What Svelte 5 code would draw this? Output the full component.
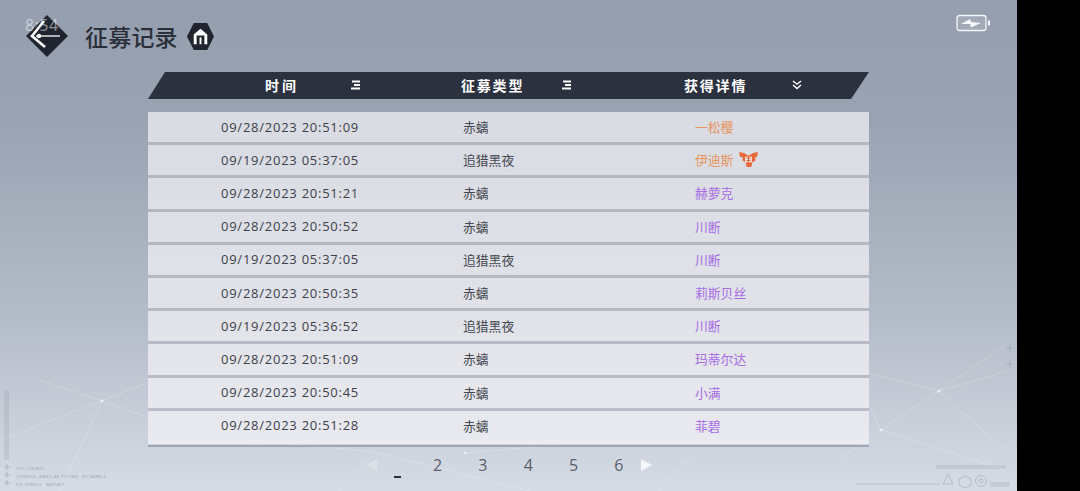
<script lang="ts">
	const rows = [
		{ time: '09/28/2023 20:51:09', type: '赤螭', name: '一松樱', tier: 'orange' },
		{ time: '09/19/2023 05:37:05', type: '追猎黑夜', name: '伊迪斯', tier: 'orange', badge: true },
		{ time: '09/28/2023 20:51:21', type: '赤螭', name: '赫萝克', tier: 'purple' },
		{ time: '09/28/2023 20:50:52', type: '赤螭', name: '川断', tier: 'purple' },
		{ time: '09/19/2023 05:37:05', type: '追猎黑夜', name: '川断', tier: 'purple' },
		{ time: '09/28/2023 20:50:35', type: '赤螭', name: '莉斯贝丝', tier: 'purple' },
		{ time: '09/19/2023 05:36:52', type: '追猎黑夜', name: '川断', tier: 'purple' },
		{ time: '09/28/2023 20:51:09', type: '赤螭', name: '玛蒂尔达', tier: 'purple' },
		{ time: '09/28/2023 20:50:45', type: '赤螭', name: '小满', tier: 'purple' },
		{ time: '09/28/2023 20:51:28', type: '赤螭', name: '菲碧', tier: 'purple' }
	];
	const pages = [2, 3, 4, 5, 6];
</script>

<div class="screen">
	<svg class="mesh" viewBox="0 0 1017 491" aria-hidden="true">
		<g stroke="#fff" stroke-opacity="0.2" stroke-width="1" fill="none">
			<polyline points="0,440 102,401 148,382" />
			<polyline points="40,380 102,401 150,418" />
			<polyline points="102,401 60,491" />
			<polyline points="869,373 939,391 1005,345" />
			<polyline points="939,391 1005,372" />
			<polyline points="939,391 1010,455" />
			<polyline points="881,430 939,391" />
			<polyline points="881,430 1005,470" />
			<polyline points="869,405 881,430 840,458" />
			<polyline points="340,491 375,452 530,491" />
			<polyline points="375,452 250,440" />
			<polyline points="465,453 560,445" />
			<polyline points="660,491 700,445" />
		</g>
		<g fill="#fff" fill-opacity="0.6">
			<circle cx="102" cy="401" r="1.6" />
			<circle cx="939" cy="391" r="1.6" />
			<circle cx="881" cy="430" r="1.6" />
			<circle cx="465" cy="453" r="1.3" />
		</g>
		<g stroke="#8d96a6" stroke-opacity="0.45" fill="none">
			<path d="M1010 344v8M1006 348h8M1010 360v8M1006 364h8" />
			<path d="M4 467h6M7 464v6M4 475h6M7 472v6M4 483h6M7 480v6" />
			<path d="M856 484h84" />
			<path d="M948 474l-5 10h10z" />
			<path d="M965 476l6 3v6l-6 3-6-3v-6z" />
			<circle cx="981" cy="481" r="5.5" />
			<circle cx="981" cy="481" r="2" />
		</g>
		<g fill="#8d96a6" fill-opacity="0.22">
			<rect x="4" y="390" width="5" height="70" />
			<rect x="936" y="465" width="70" height="4" />
			<rect x="990" y="482" width="20" height="5" />
		</g>
	</svg>

	<div class="hud">
		<span>CITY COUNTS</span>
		<span>CONSOLE: ANGULAR PITTING &nbsp; RU-SARB14</span>
		<span>DIE-TENSILE · BASTACT</span>
	</div>

	<header class="topbar">
		<div class="back">
			<svg viewBox="0 0 52 44" width="52" height="44" aria-hidden="true">
				<path d="M26 1 47 22 26 43 5 22z" fill="#20242e" />
				<path d="M23 7 11 22l13 11" fill="none" stroke="#fff" stroke-width="2.6" />
				<path d="M15 22h24" stroke="#fff" stroke-width="1.3" />
				<circle cx="18" cy="22" r="2.2" fill="#fff" />
			</svg>
			<span class="clock">8:54</span>
		</div>
		<h1>征募记录</h1>
		<svg class="home" viewBox="0 0 30 30" width="29" height="29" aria-hidden="true">
			<path d="M8 1h14l7 14-7 14H8L1 15z" fill="#20242e" />
			<path d="M8 23V13l7-6 7 6v10h-3v-9h-8v9z" fill="#fff" />
			<rect x="14" y="16" width="2" height="7" fill="#fff" />
		</svg>
		<div class="battery">
			<svg viewBox="0 0 34 18" width="34" height="18" aria-hidden="true">
				<rect x="1" y="1.5" width="29" height="15" rx="2.5" fill="rgba(255,255,255,0.12)" stroke="#f4f6f9" stroke-width="1.3" />
				<rect x="32" y="6.5" width="2" height="5" fill="#f4f6f9" />
				<path d="M5 10l9-5 1 3 10 1-10 4.500-1-3.500z" fill="#f8f9fb" />
			</svg>
		</div>
	</header>

	<main class="board">
		<div class="head">
			<div class="hcell first">
				<span class="htitle wide">时间</span>
				<svg viewBox="0 0 10 10" width="10" height="10" aria-hidden="true"><path d="M1 .5h8v2H1zM3 4h6v2H3zM0 7.500h9v2H0z" fill="#fff" /></svg>
			</div>
			<div class="hcell second">
				<span class="htitle">征募类型</span>
				<svg viewBox="0 0 10 10" width="10" height="10" aria-hidden="true"><path d="M1 .5h8v2H1zM3 4h6v2H3zM0 7.500h9v2H0z" fill="#fff" /></svg>
			</div>
			<div class="hcell third">
				<span class="htitle">获得详情</span>
				<svg viewBox="0 0 10 10" width="10" height="10" aria-hidden="true"><path d="M1 1l4 3.200L9 1M1 5l4 3.500L9 5" fill="none" stroke="#fff" stroke-width="1.4" /></svg>
			</div>
		</div>

		<ul class="rows">
			{#each rows as row}
				<li class="row">
					<span class="time">{row.time}</span>
					<span class="type">{row.type}</span>
					<span class="name {row.tier}">
						{row.name}
						{#if row.badge}
							<svg viewBox="0 0 20 18" width="19" height="17" aria-hidden="true">
								<path d="M0 1l5 1 5 3 5-3 5-1-1 5-2 1 .5 3-3.500 2-1 5h-5l-1-5-3.500-2L4 7 1 6z" fill="#e8683a" />
								<path d="M6.500 6h7v6h-7z" fill="#f7ece4" />
								<path d="M8 7.500h4M8 10h4M10 6v6" stroke="#d9542a" stroke-width="1" />
							</svg>
						{/if}
					</span>
				</li>
			{/each}
		</ul>

		<div class="rule"></div>

		<nav class="pager">
			<span class="tri left"></span>
			<span class="current"></span>
			{#each pages as p}
				<span class="page">{p}</span>
			{/each}
			<span class="tri right"></span>
		</nav>
	</main>
</div>

<style>
	:global(body) {
		margin: 0;
		background: #000;
	}

	.screen {
		position: relative;
		width: 1017px;
		height: 491px;
		overflow: hidden;
		background: linear-gradient(180deg, #959eae 0%, #9aa3b2 25%, #b4bcc9 65%, #d6dce5 100%);
		font-family: 'Open Sans', 'Noto Sans CJK SC', sans-serif;
		color: #3c4049;
	}

	.mesh {
		position: absolute;
		inset: 0;
		width: 100%;
		height: 100%;
	}

	.hud {
		position: absolute;
		left: 16px;
		bottom: 4px;
		display: flex;
		flex-direction: column;
		gap: 3px;
		font-size: 4px;
		line-height: 5px;
		letter-spacing: 0.3px;
		color: rgba(120, 128, 145, 0.7);
	}

	.topbar {
		position: relative;
		display: flex;
		align-items: center;
		height: 72px;
		padding: 0 27px 0 21px;
		box-sizing: border-box;
	}

	.back {
		position: relative;
		display: flex;
		width: 52px;
		height: 44px;
	}

	.clock {
		position: absolute;
		left: 4px;
		top: 0;
		font-size: 16px;
		color: rgba(255, 255, 255, 0.5);
		letter-spacing: 0.5px;
	}

	h1 {
		margin: 0 0 0 12px;
		font-family: 'Noto Sans CJK SC', sans-serif;
		font-size: 23px;
		font-weight: 500;
		line-height: 30px;
		letter-spacing: 0.2px;
		color: #2b2f39;
	}

	.home {
		margin-left: 8px;
	}

	.battery {
		display: flex;
		margin-left: auto;
		margin-bottom: 26px;
	}

	.board {
		position: relative;
		width: 721px;
		margin-left: 148px;
	}

	.head {
		display: grid;
		grid-template-columns: 313px 223px 1fr;
		height: 27px;
		align-items: center;
		margin-bottom: 13px;
		padding-bottom: 1px;
		box-sizing: border-box;
		background: #2c3140;
		clip-path: polygon(17px 0, 100% 0, 703px 100%, 0 100%);
		color: #fff;
	}

	.hcell {
		display: flex;
		align-items: center;
	}

	.first {
		padding-left: 117px;
		gap: 52px;
	}

	.second {
		gap: 38px;
	}

	.third {
		gap: 45px;
	}

	.htitle {
		font-family: 'Noto Sans CJK SC', sans-serif;
		font-size: 14px;
		font-weight: 700;
		line-height: 20px;
		letter-spacing: 1.8px;
	}

	.htitle.wide {
		letter-spacing: 3px;
	}

	.rows {
		list-style: none;
		margin: 0;
		padding: 0;
	}

	.row {
		display: grid;
		grid-template-columns: 315px 232px 1fr;
		align-items: center;
		height: 33.2px;
		box-sizing: border-box;
		padding-bottom: 1px;
		background: rgba(244, 244, 246, 0.7);
		border-bottom: 3px solid rgba(130, 136, 150, 0.45);
		font-size: 13px;
	}

	.row:last-child {
		border-bottom-color: rgba(255, 255, 255, 0.15);
	}

	.time {
		padding-left: 73px;
		letter-spacing: 0.75px;
		color: #3d4048;
	}

	.type {
		font-family: 'Noto Sans CJK SC', sans-serif;
		font-size: 12.8px;
		color: #44474f;
	}

	.name {
		display: flex;
		align-items: center;
		gap: 6px;
		font-family: 'Noto Sans CJK SC', sans-serif;
		font-size: 12.8px;
	}

	.orange {
		color: #e8935c;
	}

	.purple {
		color: #a76ce6;
	}

	.rule {
		height: 2px;
		margin-top: 1px;
		background: rgba(130, 138, 152, 0.6);
	}

	.pager {
		display: flex;
		align-items: center;
		height: 36px;
		margin-left: 218px;
		font-size: 16px;
		color: #5b606b;
	}

	.page {
		width: 45.3px;
		text-align: center;
		line-height: 20px;
	}

	.tri {
		width: 0;
		height: 0;
		border-top: 6px solid transparent;
		border-bottom: 6px solid transparent;
	}

	.tri.left {
		border-right: 11px solid rgba(255, 255, 255, 0.25);
	}

	.tri.right {
		border-left: 11px solid #f4f6f9;
	}

	.current {
		width: 7px;
		height: 2px;
		margin: 24px 14px 0 17px;
		background: #2a2f3c;
	}
</style>
